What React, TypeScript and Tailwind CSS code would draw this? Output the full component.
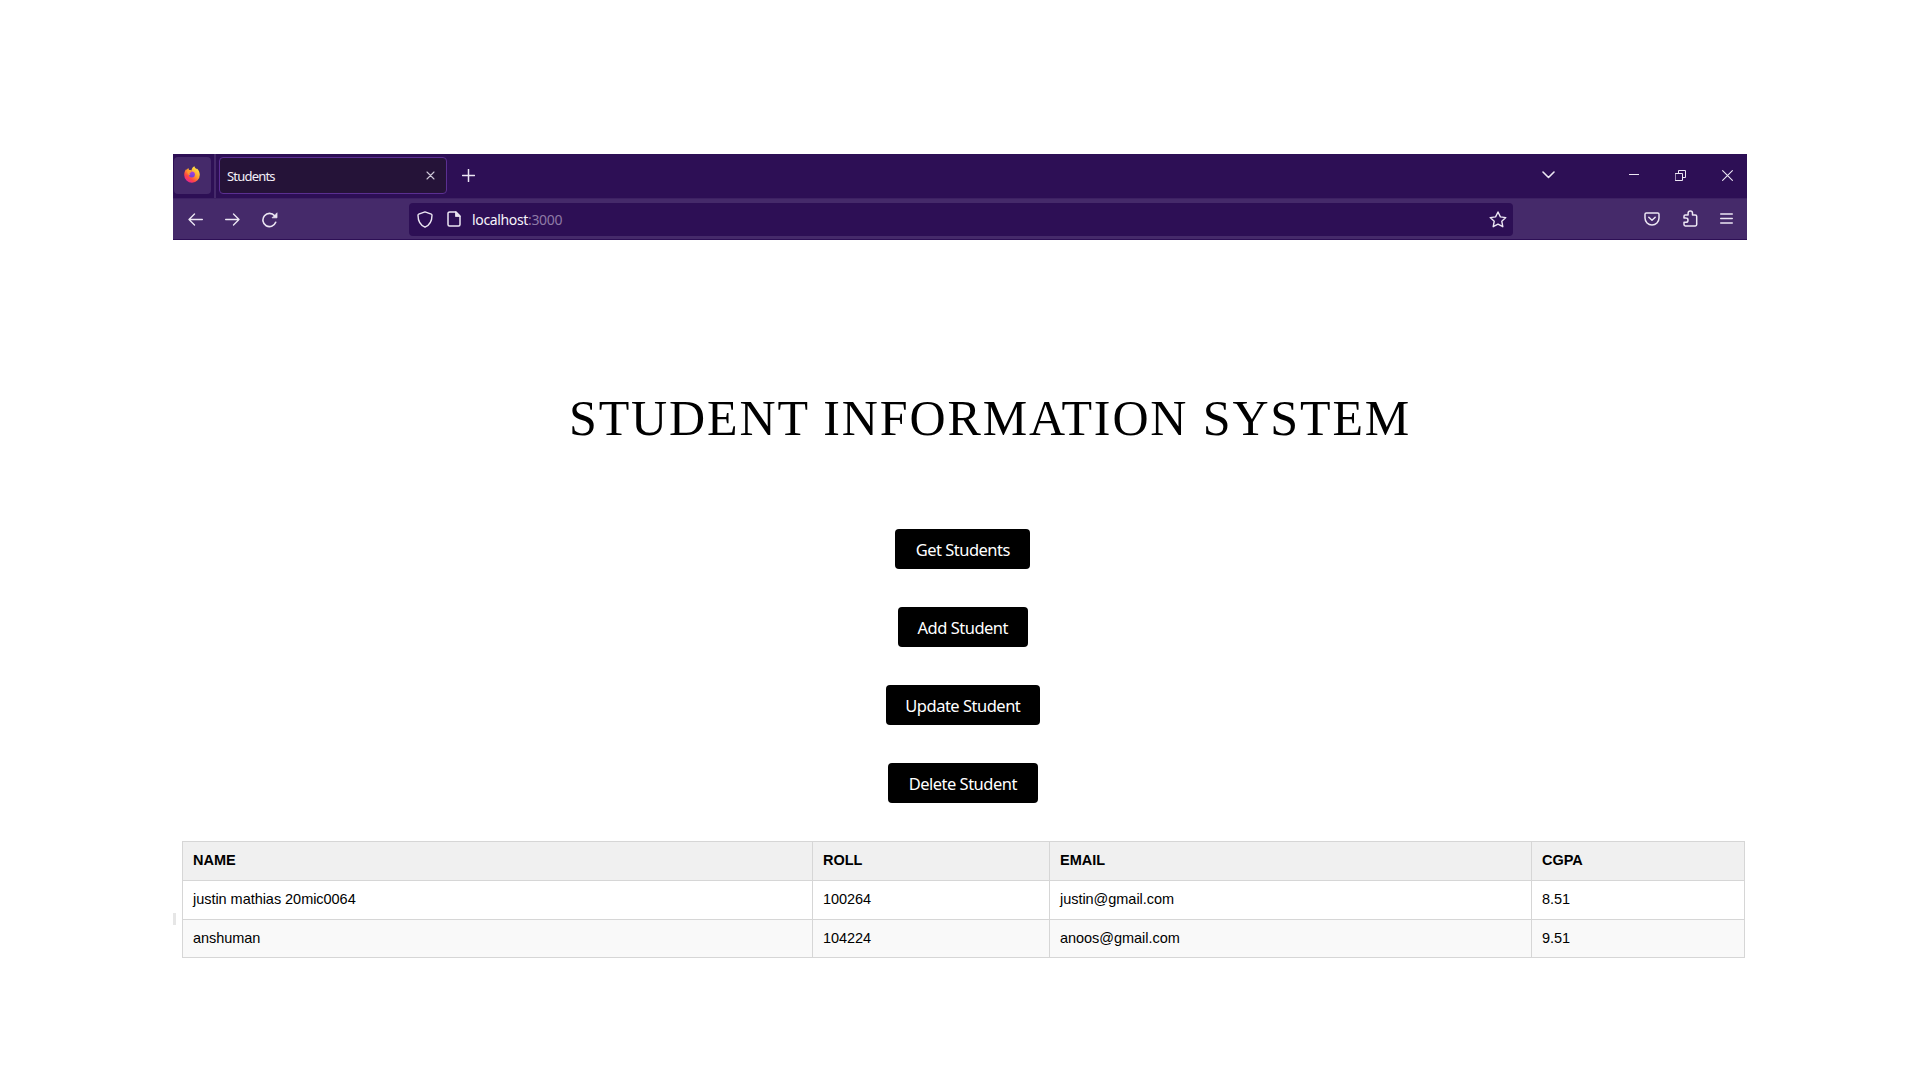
import type { ReactNode } from "react";

type IconProps = { w: number; h: number; className?: string; children: ReactNode; sw?: number };

function Icon({ w, h, className = "", children, sw = 1.4 }: IconProps) {
  return (
    <svg
      width={w}
      height={h}
      viewBox={`0 0 ${w} ${h}`}
      fill="none"
      stroke="currentColor"
      strokeWidth={sw}
      strokeLinecap="round"
      strokeLinejoin="round"
      className={`block shrink-0 ${className}`}
    >
      {children}
    </svg>
  );
}

function Firefox() {
  return (
    <svg width="16" height="17" viewBox="0 0 16 17" className="block">
      <defs>
        <linearGradient id="flame" x1="0.85" y1="0.05" x2="0.2" y2="0.95">
          <stop offset="0" stopColor="#fff04a" />
          <stop offset="0.45" stopColor="#ffa02c" />
          <stop offset="0.75" stopColor="#fd4545" />
          <stop offset="1" stopColor="#e8239a" />
        </linearGradient>
        <linearGradient id="globe" x1="0.6" y1="0" x2="0.4" y2="1">
          <stop offset="0" stopColor="#a83fe0" />
          <stop offset="1" stopColor="#6b3fd8" />
        </linearGradient>
      </defs>
      <path
        d="M10.4.2c.4 1.6 1.3 2 2 3 .3-.2.3-.6.2-1 1.900 1.500 3.200 3.900 3.200 6.600A7.800 7.800 0 0 1 .2 8.900c0-2.300.7-4.300 2.100-5.900 0 .5.1.8.3 1.100.4-.8 1-1.600 1.800-2.100 0 .8.300 1.500.8 1.900 1 0 1.700.1 2.300.6C7.600 2.800 8.600 1 10.400.2z"
        fill="url(#flame)"
      />
      <circle cx="7.9" cy="8.400" r="3" fill="url(#globe)" />
      <path d="M3.200 5.200c1.600-.8 3.400-.6 4.400.2-.3.900-1.300 1.200-1.900 1.600-.3.600 0 1.500.8 1.700-1.300.8-3.300-.9-3.300-3.500z" fill="#ff9a2e" />
    </svg>
  );
}

function TabStrip() {
  return (
    <div className="flex h-[44px] bg-[#2d0f55] pl-px">
      <div className="mt-[3px] flex h-[37px] w-[37px] items-center justify-center rounded bg-[#452a6a] pb-[3px] pr-[2px]">
        <Firefox />
      </div>
      <div className="ml-[3px] h-[44px] w-[2px] bg-[#452a6a]" />
      <div className="ml-[3px] mt-[3px] flex h-[37px] w-[228px] items-center rounded border border-[#5b2f92] bg-[#251338] pl-[7px] pr-[11px] text-[#f3f0f7]">
        <span className="mt-[2px] grow font-['Noto_Sans'] text-[13px] tracking-[-0.800px]">Students</span>
        <Icon w={9} h={9} sw={1.1} className="text-[#cfc8d8]">
          <path d="M1 1l7 7M8 1l-7 7" />
        </Icon>
      </div>
      <Icon w={13} h={13} sw={1.5} className="ml-[15px] mt-[15px] text-[#ece6f3]">
        <path d="M6.500.5v12M.5 6.500h12" />
      </Icon>
      <div className="grow" />
      <div className="flex text-[#ece6f3]">
        <Icon w={13} h={8} sw={1.6} className="mt-[17px]">
          <path d="M1 1l5.500 5.500L12 1" />
        </Icon>
        <Icon w={10} h={3} sw={1} className="ml-[74px] mt-[19px]">
          <path d="M0 1.500h10" />
        </Icon>
        <Icon w={11} h={11} sw={1} className="ml-[36px] mt-[16px]">
          <path d="M.5 3.500h7v7h-7zM3.500 3V.5h7v7H8" />
        </Icon>
        <Icon w={11} h={11} sw={1.1} className="ml-[36px] mr-[14px] mt-[16px]">
          <path d="M.6.600l9.800 9.800M10.400.600L.6 10.400" />
        </Icon>
      </div>
    </div>
  );
}

function NavBar() {
  return (
    <div className="flex h-[42px] items-center border-b border-t border-b-[#2d0f55] border-t-[#3d2163] bg-[#452a6a] pl-[15px] pr-[14px] text-[#ece6f3]">
      <Icon w={15} h={13} className="mt-px">
        <path d="M14.300 6.500H1M6.500 1L1 6.500 6.500 12" />
      </Icon>
      <Icon w={15} h={13} className="ml-[22px] mt-px">
        <path d="M.7 6.500H14M8.500 1L14 6.500 8.500 12" />
      </Icon>
      <Icon w={16} h={16} sw={1.6} className="ml-[22px] mt-[1px]">
        <path d="M13.700 10.300A6.600 6.600 0 1 1 12.600 3.800" />
        <path d="M15 1.200v4.600h-4.600z" fill="currentColor" strokeWidth="0.8" />
      </Icon>
      <div className="ml-[131px] flex h-[33px] w-[1104px] items-center rounded bg-[#2d0f55] pl-[8px] pr-[6px]">
        <Icon w={16} h={17}>
          <path d="M8 .9l6.300 2.300c.5.200.7.500.7 1 0 5.200-1.400 9.500-7 12-5.600-2.500-7-6.800-7-12 0-.5.2-.8.700-1z" />
        </Icon>
        <Icon w={14} h={16} className="ml-[14px]" sw={1.5}>
          <path d="M2.800.900h6l4.200 4.200v8.400c0 .9-.6 1.500-1.500 1.500H2.500c-.9 0-1.500-.6-1.500-1.500V2.500C1 1.500 1.700.9 2.800.9z" />
          <path d="M8.500 1v4.500h4.400z" fill="currentColor" strokeWidth="0.800" />
        </Icon>
        <span className="ml-[11px] mt-[2px] grow font-['Noto_Sans'] text-[14px] leading-[20px] tracking-[-0.35px] text-[#f7f4fa]">
          localhost<span className="text-[#8d7aa6]">:3000</span>
        </span>
        <Icon w={18} h={17}>
          <path d="M9 1l2.400 4.900 5.400.7-4 3.700 1 5.400L9 13.100l-4.800 2.600 1-5.400-4-3.700 5.400-.7z" />
        </Icon>
      </div>
      <div className="grow" />
      <Icon w={16} h={14} sw={1.5} className="mb-px">
        <path d="M2.300 1h11.400c.8 0 1.300.5 1.300 1.300V6a7 7 0 0 1-14 0V2.300C1 1.500 1.500 1 2.300 1z" />
        <path d="M4.800 5.200L8 8.300l3.200-3.100" />
      </Icon>
      <Icon w={15} h={17} sw={1.5} className="mb-[2px] ml-[23px]">
        <path d="M1 8V6.200c0-.7.400-1.200 1.200-1.200h2.900V3.200a2.200 2.200 0 0 1 4.400 0V5h2.700c1 0 1.500.4 1.500 1.300v8.200c0 1-.5 1.400-1.400 1.400H2.300c-.9 0-1.300-.5-1.300-1.300v-2.300h1.900a2 2 0 0 0 0-4.200z" />
      </Icon>
      <Icon w={13} h={11} sw={1.4} className="mb-[2px] ml-[22px]">
        <path d="M.7 1h11.600M.7 5.500h11.600M.7 10h11.600" />
      </Icon>
    </div>
  );
}

const actions = [
  { label: "Get Students", size: "w-[135px]" },
  { label: "Add Student", size: "w-[130px]" },
  { label: "Update Student", size: "w-[154px]" },
  { label: "Delete Student", size: "w-[150px]" },
];

const rows = [
  ["justin mathias 20mic0064", "100264", "justin@gmail.com", "8.51"],
  ["anshuman", "104224", "anoos@gmail.com", "9.51"],
];

export default function App() {
  return (
    <div className="h-[1080px] w-[1920px] overflow-hidden bg-white pl-[173px] pt-[154px] text-black">
      <div className="w-[1574px]">
        <TabStrip />
        <NavBar />
      </div>
      <h1 className="ml-[396px] mt-[149px] whitespace-nowrap font-['Liberation_Serif'] text-[50px] leading-[58px] tracking-[1.870px]">
        STUDENT INFORMATION SYSTEM
      </h1>
      <div className="ml-[8.800px] mt-[82px] flex w-[1562px] flex-col items-center gap-[38px]">
        {actions.map((a) => (
          <button
            key={a.label}
            className={`${a.size} h-[40px] whitespace-nowrap rounded-[4px] bg-black pt-[3px] font-['Noto_Sans'] text-[16.500px] tracking-[-0.5px] text-white`}
          >
            {a.label}
          </button>
        ))}
      </div>
      <div className="mt-[38px] flex">
        <div className="mt-[72px] h-[12px] w-[3px] bg-[#e6e6e6]" />
        <table className="ml-[6px] w-[1562px] table-fixed border-collapse font-['Liberation_Sans'] text-[14.500px]">
          <colgroup>
            <col className="w-[630px]" />
            <col className="w-[237px]" />
            <col className="w-[482px]" />
            <col className="w-[213px]" />
          </colgroup>
          <thead>
            <tr className="h-[39px] bg-[#f0f0f0]">
              {["NAME", "ROLL", "EMAIL", "CGPA"].map((h) => (
                <th key={h} className="border border-[#d6d6d6] px-[10px] py-0 text-left font-bold">
                  {h}
                </th>
              ))}
            </tr>
          </thead>
          <tbody>
            {rows.map((r) => (
              <tr key={r[0]} className="h-[38.500px] even:bg-[#f9f9f9]">
                {r.map((c) => (
                  <td key={c} className="border border-[#d6d6d6] px-[10px] pb-0 pt-px tracking-[-0.040px]">
                    {c}
                  </td>
                ))}
              </tr>
            ))}
          </tbody>
        </table>
      </div>
    </div>
  );
}
